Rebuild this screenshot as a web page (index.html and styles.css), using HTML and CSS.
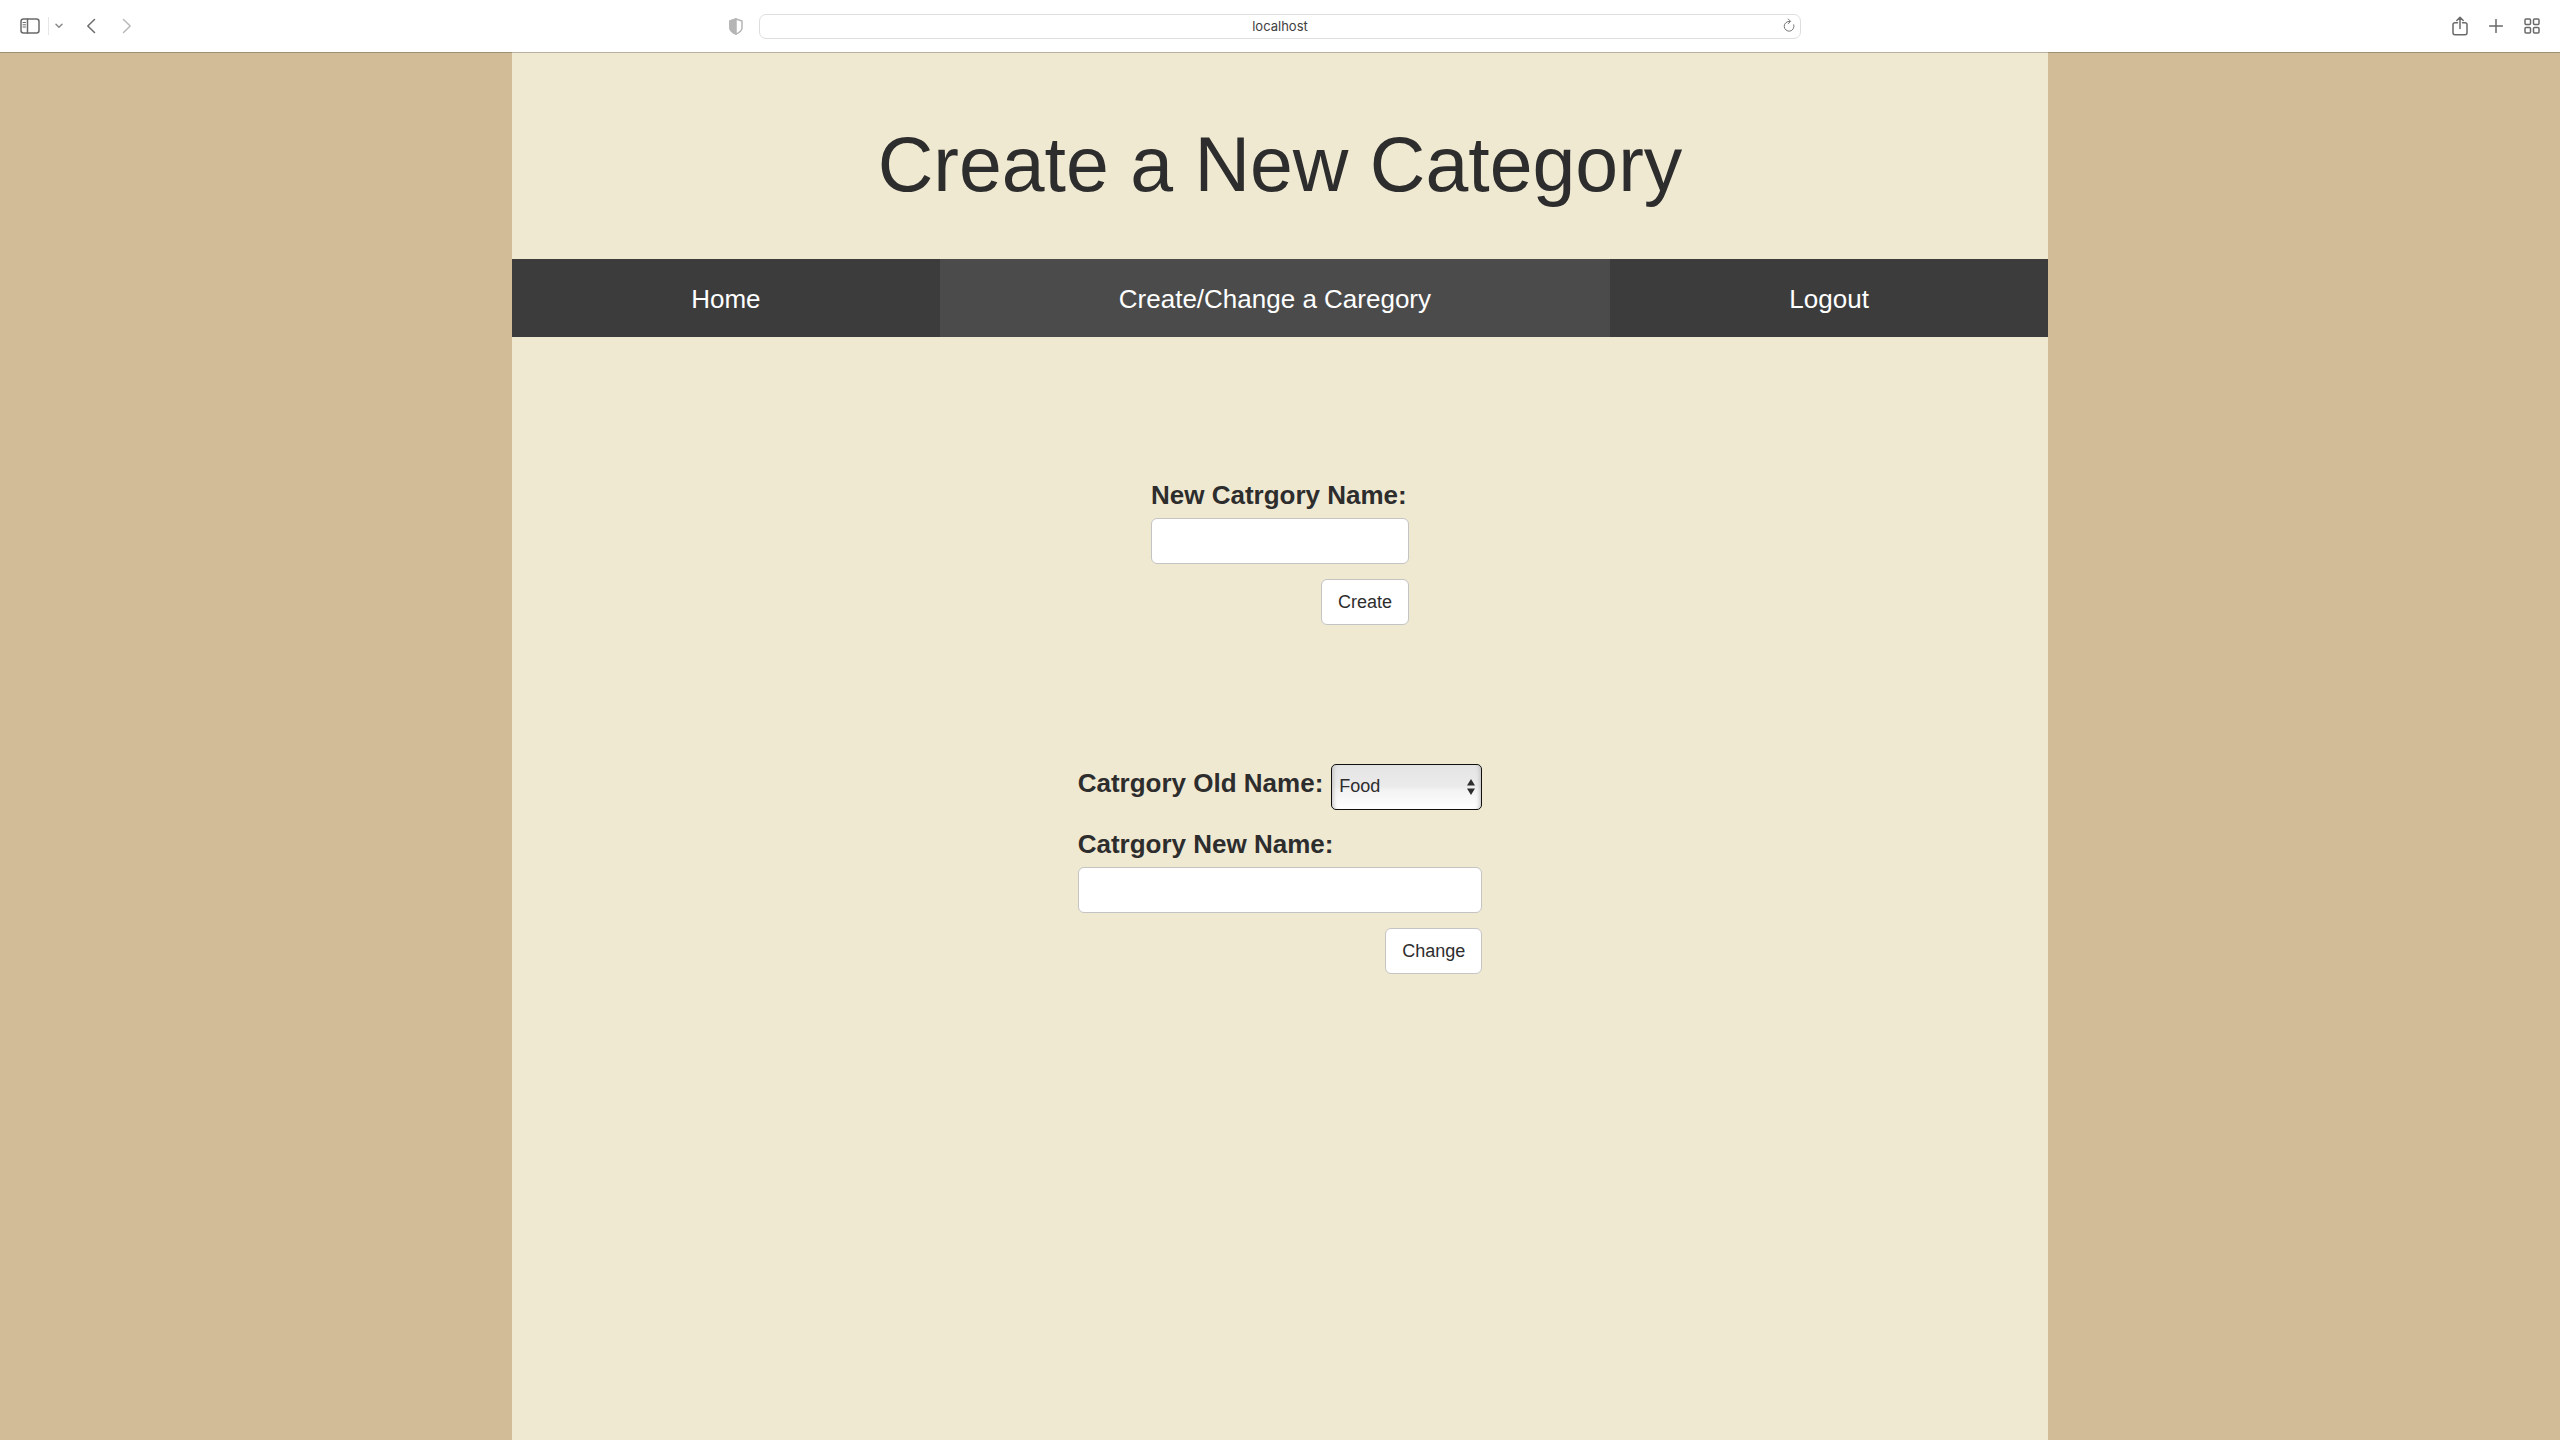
FILE: index.html
```html
<!DOCTYPE html>
<html lang="en">
<head>
<meta charset="utf-8">
<meta name="viewport" content="width=device-width, initial-scale=1">
<title>Create a New Category</title>
<link rel="stylesheet" href="styles.css">
</head>
<body>
<div class="toolbar">
  <div class="tools tools-left">
    <button type="button" class="tool" aria-label="Sidebar">
      <svg width="20" height="16" viewBox="0 0 20 16"><rect x="1" y="1" width="18" height="14" rx="2.5"/><path d="M7.5 1v14"/><path class="thin" d="M3 4.5h2.5M3 6.8h2.5M3 9h2.5"/></svg>
    </button>
    <span class="divider"></span>
    <button type="button" class="tool tool-menu" aria-label="Sidebar menu">
      <svg width="8" height="6" viewBox="0 0 8 6"><path d="M1 1.2 4 4.2 7 1.2"/></svg>
    </button>
    <button type="button" class="tool tool-back" aria-label="Back">
      <svg width="10" height="16" viewBox="0 0 10 16"><path d="M8.5 1.5 1.8 8l6.7 6.5"/></svg>
    </button>
    <button type="button" class="tool tool-forward" aria-label="Forward">
      <svg width="10" height="16" viewBox="0 0 10 16"><path d="M1.5 1.5 8.2 8l-6.7 6.5"/></svg>
    </button>
    <button type="button" class="tool tool-shield" aria-label="Privacy report">
      <svg width="14" height="17" viewBox="0 0 14 17"><path d="M7 1 13 3v7c0 2.800-2.500 4.500-6 6.200C3.500 14.500 1 12.800 1 10V3z"/><path class="solid" d="M7 1v15.200C3.500 14.500 1 12.800 1 10V3z"/></svg>
    </button>
  </div>
  <div class="address">
    <input class="address-field" type="text" value="localhost" aria-label="Address">
    <button type="button" class="tool reload" aria-label="Reload">
      <svg width="12" height="14" viewBox="0 0 12 14"><path d="M10.800 6.800A4.900 4.900 0 1 1 6.800 3.400"/><path d="M5.200 1 7.600 3.400 5.200 5.700"/></svg>
    </button>
  </div>
  <div class="tools tools-right">
    <button type="button" class="tool" aria-label="Share">
      <svg width="16" height="20" viewBox="0 0 16 20"><path d="M5.500 6.800H3A2 2 0 0 0 1 8.800v8a2 2 0 0 0 2 2h10a2 2 0 0 0 2-2v-8a2 2 0 0 0-2-2h-2.500M8 12.500V1.500M4.800 4.500 8 1.300l3.200 3.200"/></svg>
    </button>
    <button type="button" class="tool" aria-label="New tab">
      <svg width="14" height="14" viewBox="0 0 14 14"><path d="M7 .5v13M.5 7h13"/></svg>
    </button>
    <button type="button" class="tool" aria-label="Tab overview">
      <svg width="16" height="16" viewBox="0 0 16 16"><rect x="1" y="1" width="5.500" height="5.500" rx="1"/><rect x="9.500" y="1" width="5.500" height="5.500" rx="1"/><rect x="1" y="9.500" width="5.500" height="5.500" rx="1"/><rect x="9.500" y="9.500" width="5.500" height="5.500" rx="1"/></svg>
    </button>
  </div>
</div>

<div class="page">
  <h1 class="title">Create a New Category</h1>
  <nav class="nav">
    <a class="nav-link" href="#home">Home</a>
    <a class="nav-link active" href="#category">Create/Change a Caregory</a>
    <a class="nav-link" href="#logout">Logout</a>
  </nav>
  <main class="forms">
    <form class="form">
      <label class="label" for="create-name">New Catrgory Name:</label>
      <input class="field" id="create-name" type="text">
      <button class="button" type="submit">Create</button>
    </form>
    <form class="form">
      <div class="row">
        <label class="label" for="old-name">Catrgory Old Name:</label>
        <div class="select-box">
          <select class="select" id="old-name"><option>Food</option></select>
          <svg class="select-arrows" width="8" height="16" viewBox="0 0 8 16"><path d="M0 6.500 4 0l4 6.500zM0 9.500h8L4 16z"/></svg>
        </div>
      </div>
      <label class="label" for="new-name">Catrgory New Name:</label>
      <input class="field" id="new-name" type="text">
      <button class="button" type="submit">Change</button>
    </form>
  </main>
</div>
</body>
</html>
```
FILE: styles.css
```css
* { box-sizing: border-box; }

body {
  display: flex;
  flex-direction: column;
  min-height: 100vh;
  margin: 0;
  background: #d2bc97;
  color: #2d2d2d;
  font-family: "Liberation Sans", Arial, sans-serif;
}

button, input, select { margin: 0; font: inherit; color: inherit; }

/* Browser toolbar */
.toolbar {
  position: relative;
  z-index: 1;
  display: grid;
  grid-template-columns: 1fr minmax(0, 1042px) 1fr;
  align-items: center;
  height: 52px;
  padding: 0 20px;
  background: #fff;
  box-shadow: 0 1px rgba(0, 0, 0, 0.24);
}

.tools { display: flex; align-items: center; }
.tools-right { justify-content: flex-end; gap: 21px; }

.tool {
  display: flex;
  padding: 0;
  border: 0;
  background: none;
  color: #6a6a6a;
}

.tool svg {
  fill: none;
  stroke: currentColor;
  stroke-width: 1.5;
  stroke-linecap: round;
  stroke-linejoin: round;
}

.tool .thin { stroke-width: 1; }
.tool .solid { fill: currentColor; }

.divider {
  width: 1px;
  height: 18px;
  margin: 0 6px 0 8px;
  background: #e6e6e6;
}

.tool-menu { color: #8a8a8a; }
.tool-back { margin-left: 23px; }
.tool-forward { margin-left: 26px; color: #b8b8b8; }
.tool-shield { margin: 0 16px 0 auto; color: #b5b5b5; }

.address { position: relative; }

.address-field {
  display: block;
  width: 100%;
  height: 25px;
  padding: 0 24px 1px;
  border: 1px solid #dedede;
  border-radius: 7px;
  background: #fff;
  color: #404040;
  font-family: Inter, sans-serif;
  font-size: 13px;
  text-align: center;
}

.reload { position: absolute; top: 4px; right: 6px; color: #777; }
.tool.reload svg { stroke-width: 1; }

/* Page */
.page {
  flex: 1;
  width: 60%;
  margin: 0 auto;
  background: #f0e9d2;
}

.title {
  margin: 0;
  padding: 64px 0 47px;
  font-size: 77px;
  font-weight: 400;
  line-height: 96px;
  text-align: center;
}

.nav { display: flex; background: #3c3c3c; }

.nav-link {
  flex: 1 1 auto;
  padding: 21px 0 19px;
  color: #fff;
  font-size: 26px;
  line-height: 38px;
  text-align: center;
  text-decoration: none;
}

.nav-link.active { background: #4b4b4b; }

.forms {
  display: flex;
  flex-direction: column;
  align-items: center;
  gap: 139px;
  padding: 139px 0;
}

.form { display: grid; min-width: 258px; }
.row { display: flex; gap: 8px; margin-bottom: 15px; }

.label {
  font-size: 26px;
  font-weight: 700;
  line-height: 38px;
}

.field, .button, .select {
  height: 46px;
  border: 1px solid #c4c4c4;
  border-radius: 6px;
  background: #fff;
  font-size: 18px;
}

.field {
  width: 0;
  min-width: 100%;
  margin: 4px 0 15px;
  padding: 0 15px;
}

.button { justify-self: end; padding: 0 16px; }

.select-box { position: relative; }

.select {
  appearance: none;
  width: 151px;
  padding: 0 24px 2px 7px;
  border-color: #111;
  border-radius: 5px;
  background: linear-gradient(#e4e4e4, #ebebeb 50%, #f2f2f2 55%, #fff);
  box-shadow: inset 5px 0 4px -4px #bbb, inset -5px 0 4px -4px #bbb;
}

.select-arrows {
  position: absolute;
  top: 15px;
  right: 7px;
  fill: #2d2d2d;
  pointer-events: none;
}
```
